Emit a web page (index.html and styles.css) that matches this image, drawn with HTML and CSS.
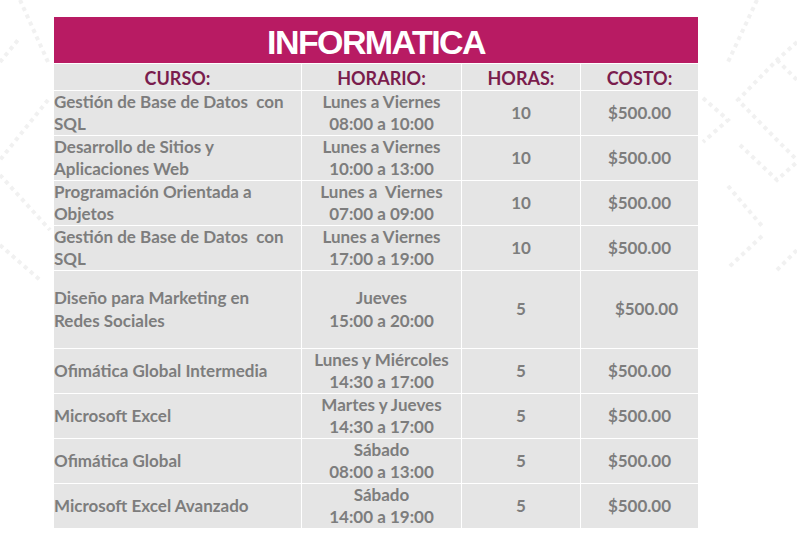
FILE: index.html
```html
<!DOCTYPE html>
<html lang="es">
<head>
<meta charset="utf-8">
<title>Informatica</title>
<link rel="stylesheet" href="styles.css">
</head>
<body>
<svg class="deco" width="797" height="557" viewBox="0 0 797 557" aria-hidden="true">
  <g fill="none" stroke="#f1f1f1" stroke-width="4" stroke-dasharray="4 4">
    <path d="M757 0 L728 62"/>
    <path d="M797 42 L777 60 L738 100 L777 140 L797 160"/>
    <path d="M777 60 L797 80"/>
    <path d="M703 98 L728 120 L703 142"/>
    <path d="M740 145 L777 180 L797 162"/>
    <path d="M728 186 L762 226"/>
    <path d="M762 236 L728 268"/>
    <path d="M777 270 L797 250"/>
    <path d="M20 0 L48 62"/>
    <path d="M0 62 L18 40"/>
    <path d="M48 100 L0 160"/>
    <path d="M0 175 L50 230"/>
    <path d="M0 245 L40 280"/>
  </g>
</svg>
<main class="sheet">
  <h1 class="title">INFORMATICA</h1>
  <div class="grid">
    <div class="th">CURSO:</div>
    <div class="th">HORARIO:</div>
    <div class="th">HORAS:</div>
    <div class="th">COSTO:</div>

    <div class="td course">Gestión de Base de Datos&nbsp; con<br>SQL</div>
    <div class="td center">Lunes a Viernes<br>08:00 a 10:00</div>
    <div class="td center">10</div>
    <div class="td center">$500.00</div>

    <div class="td course">Desarrollo de Sitios y<br>Aplicaciones Web</div>
    <div class="td center">Lunes a Viernes<br>10:00 a 13:00</div>
    <div class="td center">10</div>
    <div class="td center">$500.00</div>

    <div class="td course">Programación Orientada a<br>Objetos</div>
    <div class="td center">Lunes a&nbsp; Viernes<br>07:00 a 09:00</div>
    <div class="td center">10</div>
    <div class="td center">$500.00</div>

    <div class="td course">Gestión de Base de Datos&nbsp; con<br>SQL</div>
    <div class="td center">Lunes a Viernes<br>17:00 a 19:00</div>
    <div class="td center">10</div>
    <div class="td center">$500.00</div>

    <div class="td course">Diseño para Marketing en<br>Redes Sociales</div>
    <div class="td center">Jueves<br>15:00 a 20:00</div>
    <div class="td center">5</div>
    <div class="td center shifted">$500.00</div>

    <div class="td course">Ofimática Global Intermedia</div>
    <div class="td center">Lunes y Miércoles<br>14:30 a 17:00</div>
    <div class="td center">5</div>
    <div class="td center">$500.00</div>

    <div class="td course">Microsoft Excel</div>
    <div class="td center">Martes y Jueves<br>14:30 a 17:00</div>
    <div class="td center">5</div>
    <div class="td center">$500.00</div>

    <div class="td course">Ofimática Global</div>
    <div class="td center">Sábado<br>08:00 a 13:00</div>
    <div class="td center">5</div>
    <div class="td center">$500.00</div>

    <div class="td course">Microsoft Excel Avanzado</div>
    <div class="td center">Sábado<br>14:00 a 19:00</div>
    <div class="td center">5</div>
    <div class="td center">$500.00</div>
  </div>
</main>
</body>
</html>
```
FILE: styles.css
```css
html, body {
  margin: 0;
  padding: 0;
  background: #ffffff;
}
body {
  width: 797px;
  height: 557px;
  overflow: hidden;
  position: relative;
  font-family: Lato, "Open Sans", sans-serif;
}
.deco {
  position: absolute;
  left: 0;
  top: 0;
  z-index: 0;
}
.sheet {
  position: relative;
  z-index: 1;
  width: 644px;
  margin: 17px 0 0 54px;
  display: flex;
  flex-direction: column;
  gap: 1px;
  background: #ffffff;
}
.title {
  margin: 0;
  height: 46px;
  background: #b81b63;
  color: #ffffff;
  font-family: "Liberation Sans", Arial, sans-serif;
  font-weight: 700;
  font-size: 34px;
  letter-spacing: -1.6px;
  line-height: 46px;
  text-align: center;
  padding-top: 2px;
  box-sizing: border-box;
}
.grid {
  display: grid;
  grid-template-columns: 247px 159px 118px 117px;
  grid-template-rows: 26px 44px 44px 44px 44px 77px 44px 44px 44px 44px;
  gap: 1px;
  background: #ffffff;
}
.th, .td {
  background: #e5e5e5;
  font-weight: 700;
  display: flex;
  align-items: center;
}
.th {
  justify-content: center;
  color: #7a1d4d;
  font-size: 18px;
  padding-top: 1px;
}
.td {
  color: #7d7d7d;
  font-size: 17px;
  line-height: 22.5px;
}
.course {
  justify-content: flex-start;
}
.center {
  justify-content: center;
  text-align: center;
}
.shifted {
  padding-left: 14px;
}
```
